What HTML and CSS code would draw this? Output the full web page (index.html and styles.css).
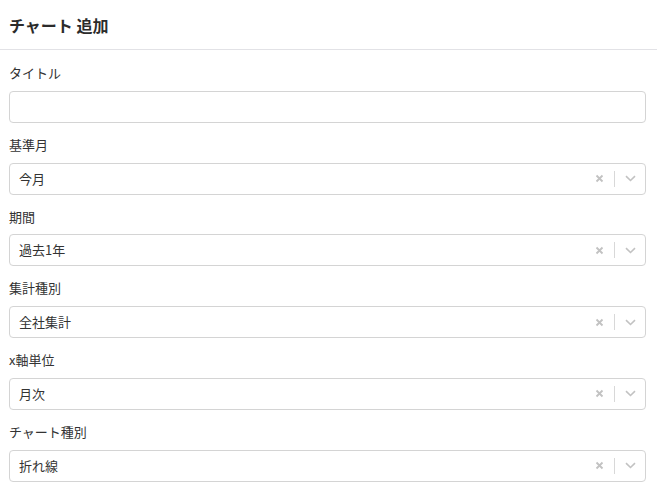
FILE: index.html
```html
<!DOCTYPE html>
<html lang="ja">
<head>
    <meta charset="UTF-8">
    <title>チャート 追加</title>
    <link rel="stylesheet" href="styles.css">
</head>
<body>
    <div class="modal">
        <div class="modal-header">
            <h2 class="title">チャート 追加</h2>
        </div>
        <div class="modal-body">
            <div class="field">
                <label class="label">タイトル</label>
                <input class="text-input" type="text">
            </div>
            <div class="field">
                <label class="label">基準月</label>
                <div class="select">
                    <div class="value">今月</div>
                    <div class="indicators">
                        <span class="clear"><svg width="9" height="9" viewBox="0 0 9 9"><path d="M1.5 1.5L7.5 7.5M7.5 1.5L1.5 7.5" stroke="#c2c2c2" stroke-width="1.8"/></svg></span>
                        <span class="sep"></span>
                        <span class="chevron"><svg width="11" height="7" viewBox="0 0 11 7"><path d="M1 1.2L5.5 5.5L10 1.2" fill="none" stroke="#c2c2c2" stroke-width="1.6"/></svg></span>
                    </div>
                </div>
            </div>
            <div class="field">
                <label class="label">期間</label>
                <div class="select">
                    <div class="value">過去1年</div>
                    <div class="indicators">
                        <span class="clear"><svg width="9" height="9" viewBox="0 0 9 9"><path d="M1.5 1.5L7.5 7.5M7.5 1.5L1.5 7.5" stroke="#c2c2c2" stroke-width="1.8"/></svg></span>
                        <span class="sep"></span>
                        <span class="chevron"><svg width="11" height="7" viewBox="0 0 11 7"><path d="M1 1.2L5.5 5.5L10 1.2" fill="none" stroke="#c2c2c2" stroke-width="1.6"/></svg></span>
                    </div>
                </div>
            </div>
            <div class="field">
                <label class="label">集計種別</label>
                <div class="select">
                    <div class="value">全社集計</div>
                    <div class="indicators">
                        <span class="clear"><svg width="9" height="9" viewBox="0 0 9 9"><path d="M1.5 1.5L7.5 7.5M7.5 1.5L1.5 7.5" stroke="#c2c2c2" stroke-width="1.8"/></svg></span>
                        <span class="sep"></span>
                        <span class="chevron"><svg width="11" height="7" viewBox="0 0 11 7"><path d="M1 1.2L5.5 5.5L10 1.2" fill="none" stroke="#c2c2c2" stroke-width="1.6"/></svg></span>
                    </div>
                </div>
            </div>
            <div class="field">
                <label class="label">x軸単位</label>
                <div class="select">
                    <div class="value">月次</div>
                    <div class="indicators">
                        <span class="clear"><svg width="9" height="9" viewBox="0 0 9 9"><path d="M1.5 1.5L7.5 7.5M7.5 1.5L1.5 7.5" stroke="#c2c2c2" stroke-width="1.8"/></svg></span>
                        <span class="sep"></span>
                        <span class="chevron"><svg width="11" height="7" viewBox="0 0 11 7"><path d="M1 1.2L5.5 5.5L10 1.2" fill="none" stroke="#c2c2c2" stroke-width="1.6"/></svg></span>
                    </div>
                </div>
            </div>
            <div class="field">
                <label class="label">チャート種別</label>
                <div class="select">
                    <div class="value">折れ線</div>
                    <div class="indicators">
                        <span class="clear"><svg width="9" height="9" viewBox="0 0 9 9"><path d="M1.5 1.5L7.5 7.5M7.5 1.5L1.5 7.5" stroke="#c2c2c2" stroke-width="1.8"/></svg></span>
                        <span class="sep"></span>
                        <span class="chevron"><svg width="11" height="7" viewBox="0 0 11 7"><path d="M1 1.2L5.5 5.5L10 1.2" fill="none" stroke="#c2c2c2" stroke-width="1.6"/></svg></span>
                    </div>
                </div>
            </div>
        </div>
    </div>
</body>
</html>
```

FILE: styles.css
```css
body {
    margin: 0;
    padding: 0;
    background-color: #ffffff;
    color: #333333;
    font-family: 'Noto Sans CJK JP', 'Noto Sans', sans-serif;
}

.modal-header {
    height: 50px;
    box-sizing: border-box;
    display: flex;
    align-items: center;
    padding: 0 9px;
    border-bottom: 1px solid #e2e2e6;
}

.title {
    margin: 0;
    font-size: 16px;
    font-weight: 700;
    line-height: 24px;
    color: #2b2b2b;
}

.modal-body {
    padding: 13px 11px 0 9px;
}

.field {
    margin-bottom: 12px;
}

.label {
    display: block;
    font-size: 13px;
    line-height: 19.8px;
    margin-bottom: 8px;
    color: #333333;
}

.text-input {
    display: block;
    width: 100%;
    height: 32px;
    box-sizing: border-box;
    border: 1px solid #d4d4d4;
    border-radius: 4px;
    margin: 0;
    padding: 0 9px;
    font-size: 13px;
    font-family: inherit;
}

.select {
    display: flex;
    align-items: center;
    height: 32px;
    box-sizing: border-box;
    border: 1px solid #d4d4d4;
    border-radius: 4px;
}

.select .value {
    flex: 1;
    padding: 0 9px;
    font-size: 13px;
    line-height: 20px;
    color: #333333;
}

.indicators {
    display: flex;
    align-items: center;
    height: 100%;
}

.clear,
.chevron {
    width: 30px;
    display: flex;
    align-items: center;
    justify-content: center;
}

.sep {
    width: 1px;
    height: 16px;
    background-color: #d8d8d8;
}
```
